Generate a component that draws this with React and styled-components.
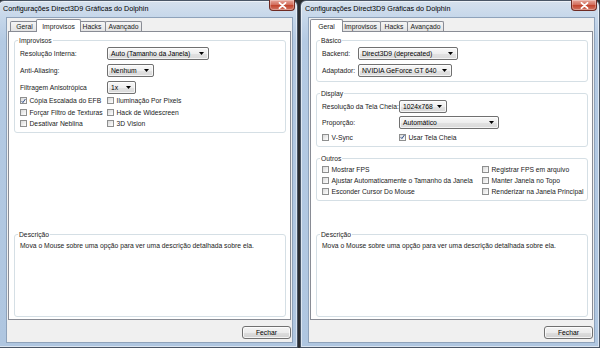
import React from 'react'
import styled, { createGlobalStyle } from 'styled-components'

const GlobalStyle = createGlobalStyle`
  html, body {
    margin: 0;
    padding: 0;
  }
  body {
    width: 600px;
    height: 348px;
    overflow: hidden;
    background: #2c2e31;
    font-family: "Liberation Sans", Arial, sans-serif;
    font-size: 6.75px;
    color: #1b1b1b;
  }
`

const Desktop = styled.div`
  display: flex;
  gap: 2px;
  width: 600px;
  height: 348px;
  overflow: hidden;
`

const Window = styled.section`
  flex: none;
  box-sizing: border-box;
  width: 300px;
  height: 348px;
  margin-left: ${p => p.$shift || 0}px;
  display: flex;
  flex-direction: column;
  border: 1px solid #4a5666;
  border-radius: 6px 6px 0 0;
  background: linear-gradient(180deg, #d6e1ed 0, #c6d7ea 16px, #b4cae3 40px, #afc6e0 100%);
  box-shadow: inset 0 0 0 1px rgba(255, 255, 255, 0.55);
`

const TitleBar = styled.div`
  height: 16px;
  display: flex;
  align-items: flex-start;
  padding: 0 2px 0 4px;
`

const Title = styled.span`
  padding-top: 3px;
  font-size: 7.2px;
  line-height: 9px;
  color: #000;
  white-space: nowrap;
`

const CloseButton = styled.div`
  margin-left: auto;
  margin-top: -1px;
  box-sizing: border-box;
  width: 26px;
  height: 11px;
  display: flex;
  align-items: center;
  justify-content: center;
  border: 1px solid #6e2a22;
  border-top: none;
  border-radius: 0 0 4px 4px;
  background: linear-gradient(180deg, #e7a99d 0%, #d3705f 45%, #c2462f 55%, #d27564 100%);
  box-shadow: inset 0 0 0 1px rgba(255, 255, 255, 0.3);
`

const Client = styled.div`
  flex: 1;
  display: flex;
  flex-direction: column;
  margin: 0 4px 4px 7px;
  padding: 1px 1px 0 1px;
  border: 1px solid #8ea2ba;
  background: #f0f0f0;
`

const TabStrip = styled.div`
  height: 12px;
  display: flex;
  align-items: flex-end;
  padding-left: 2px;
`

const Tab = styled.div`
  position: relative;
  z-index: ${p => (p.$active ? 2 : 1)};
  box-sizing: border-box;
  width: ${p => p.$w + (p.$active ? 4 : 0)}px;
  height: ${p => (p.$active ? 13 : 10)}px;
  margin-left: ${p => (p.$first ? 0 : -1) - (p.$active ? 2 : 0)}px;
  margin-right: ${p => (p.$active ? -2 : 0)}px;
  margin-bottom: ${p => (p.$active ? -1 : 0)}px;
  display: flex;
  align-items: center;
  justify-content: center;
  border: 1px solid #898c95;
  border-bottom: none;
  border-radius: 2px 2px 0 0;
  background: ${p => (p.$active ? '#fff' : 'linear-gradient(180deg, #f5f5f5, #e3e3e3)')};
  white-space: nowrap;
  line-height: 9px;
`

const Panel = styled.div`
  flex: 1;
  display: flex;
  flex-direction: column;
  box-sizing: border-box;
  padding: 4px 4px 2px 5px;
  background: #fff;
  border: 1px solid #898c95;
`

const Group = styled.fieldset`
  margin: ${p => (p.$bottom ? 'auto' : `${p.$gap || 0}px`)} 0 0 0;
  padding: ${p => p.$pad || '2px 4px 3px 5px'};
  min-width: 0;
  border: 1px solid #d5dfe5;
  border-radius: 3px;
`

const Legend = styled.legend`
  margin-left: -2px;
  padding: 0 1px;
  line-height: 9px;
  color: #1b1b1b;
`

const FormGrid = styled.div`
  display: grid;
  grid-template-columns: ${p => p.$label}px auto;
  grid-auto-rows: 13px;
  row-gap: ${p => p.$gap}px;
  align-items: center;
  justify-items: start;
  white-space: nowrap;
`

const CheckGrid = styled.div`
  display: grid;
  grid-template-columns: ${p => p.$col}px auto;
  grid-auto-rows: ${p => p.$row}px;
  margin-top: ${p => p.$top || 0}px;
  align-items: center;
  white-space: nowrap;
`

const SelectBox = styled.div`
  box-sizing: border-box;
  width: ${p => p.$w}px;
  height: 13px;
  display: flex;
  align-items: center;
  justify-content: space-between;
  padding: 0 4px 0 3px;
  border: 1px solid #707070;
  border-radius: 2px;
  background: linear-gradient(180deg, #f8f8f8 0%, #eeeeee 50%, #e2e2e2 51%, #d9d9d9 100%);
  box-shadow: inset 0 0 0 1px rgba(255, 255, 255, 0.7);
  white-space: nowrap;
  line-height: 9px;
  color: #000;
`

const CheckRow = styled.label`
  display: flex;
  align-items: center;
  gap: 2.5px;
  line-height: 9px;
`

const Box = styled.span`
  flex: none;
  box-sizing: border-box;
  width: 7px;
  height: 7px;
  display: flex;
  align-items: center;
  justify-content: center;
  border: 1px solid #8e8f8f;
  background: linear-gradient(135deg, #d9d9d9 0%, #f4f4f4 70%, #ffffff 100%);
`

const DescText = styled.div`
  height: 72px;
  line-height: 9px;
  white-space: nowrap;
`

const Footer = styled.div`
  height: 22px;
  box-sizing: border-box;
  padding-top: 6px;
  display: flex;
  justify-content: flex-end;
  align-items: flex-start;
`

const Button = styled.div`
  box-sizing: border-box;
  width: 49px;
  height: 13px;
  display: flex;
  align-items: center;
  justify-content: center;
  border: 1px solid #707070;
  border-radius: 3px;
  background: linear-gradient(180deg, #f4f4f4 0%, #ececec 50%, #dedede 51%, #d1d1d1 100%);
  box-shadow: inset 0 0 0 1px rgba(255, 255, 255, 0.75);
  line-height: 9px;
  color: #000;
`

function Select ({ w, children }) {
  return (
    <SelectBox $w={w}>
      <span>{children}</span>
      <svg width='5' height='3' viewBox='0 0 5 3'>
        <polygon points='0,0 5,0 2.5,3' fill='#000' />
      </svg>
    </SelectBox>
  )
}

function Check ({ checked, children }) {
  return (
    <CheckRow>
      <Box>
        {checked && (
          <svg width='6' height='6' viewBox='0 0 6 6'>
            <path d='M0.8 3.2 L2.3 4.9 L5.3 0.6' fill='none' stroke='#2f4e86' strokeWidth='1.2' />
          </svg>
        )}
      </Box>
      {children}
    </CheckRow>
  )
}

const TABS = [
  { name: 'Geral', w: 29 },
  { name: 'Improvisos', w: 41 },
  { name: 'Hacks', w: 28 },
  { name: 'Avançado', w: 37 }
]

function Frame ({ active, shift, children }) {
  return (
    <Window $shift={shift}>
      <TitleBar>
        <Title>Configurações Direct3D9 Gráficas do Dolphin</Title>
        <CloseButton>
          <svg width='9' height='7' viewBox='0 0 9 7'>
            <path d='M1.5 0.8 L7.5 6.2 M7.5 0.8 L1.5 6.2' stroke='#fff' strokeWidth='1.8' strokeLinecap='round' />
          </svg>
        </CloseButton>
      </TitleBar>
      <Client>
        <TabStrip>
          {TABS.map((t, i) => (
            <Tab key={t.name} $w={t.w} $first={i === 0} $active={t.name === active}>
              {t.name}
            </Tab>
          ))}
        </TabStrip>
        <Panel>
          {children}
          <Group $bottom>
            <Legend>Descrição</Legend>
            <DescText>Mova o Mouse sobre uma opção para ver uma descrição detalhada sobre ela.</DescText>
          </Group>
        </Panel>
        <Footer>
          <Button>Fechar</Button>
        </Footer>
      </Client>
    </Window>
  )
}

export default function App () {
  return (
    <>
      <GlobalStyle />
      <Desktop>
        <Frame active='Improvisos' shift={-2}>
          <Group $pad='2px 4px 2px 5px'>
            <Legend>Improvisos</Legend>
            <FormGrid $label={87} $gap={3.8}>
              <span>Resolução Interna:</span>
              <Select w={102}>Auto (Tamanho da Janela)</Select>
              <span>Anti-Aliasing:</span>
              <Select w={47}>Nenhum</Select>
              <span>Filtragem Anisotrópica</span>
              <Select w={29}>1x</Select>
            </FormGrid>
            <CheckGrid $col={87} $row={11.5} $top={1.5}>
              <Check checked>Cópia Escalada do EFB</Check>
              <Check>Iluminação Por Pixels</Check>
              <Check>Forçar Filtro de Texturas</Check>
              <Check>Hack de Widescreen</Check>
              <Check>Desativar Neblina</Check>
              <Check>3D Vision</Check>
            </CheckGrid>
          </Group>
        </Frame>

        <Frame active='Geral'>
          <Group $pad='2px 4px 4.5px 5px'>
            <Legend>Básico</Legend>
            <FormGrid $label={36} $gap={3.5}>
              <span>Backend:</span>
              <Select w={100}>Direct3D9 (deprecated)</Select>
              <span>Adaptador:</span>
              <Select w={94}>NVIDIA GeForce GT 640</Select>
            </FormGrid>
          </Group>
          <Group $gap={6.5}>
            <Legend>Display</Legend>
            <FormGrid $label={77} $gap={3.5}>
              <span>Resolução da Tela Cheia:</span>
              <Select w={48}>1024x768</Select>
              <span>Proporção:</span>
              <Select w={100}>Automático</Select>
            </FormGrid>
            <CheckGrid $col={77} $row={11.5} $top={2.5}>
              <Check>V-Sync</Check>
              <Check checked>Usar Tela Cheia</Check>
            </CheckGrid>
          </Group>
          <Group $gap={6.5} $pad='1.5px 4px 2.5px 5px'>
            <Legend>Outros</Legend>
            <CheckGrid $col={160} $row={11.2}>
              <Check>Mostrar FPS</Check>
              <Check>Registrar FPS em arquivo</Check>
              <Check>Ajustar Automaticamente o Tamanho da Janela</Check>
              <Check>Manter Janela no Topo</Check>
              <Check>Esconder Cursor Do Mouse</Check>
              <Check>Renderizar na Janela Principal</Check>
            </CheckGrid>
          </Group>
        </Frame>
      </Desktop>
    </>
  )
}
